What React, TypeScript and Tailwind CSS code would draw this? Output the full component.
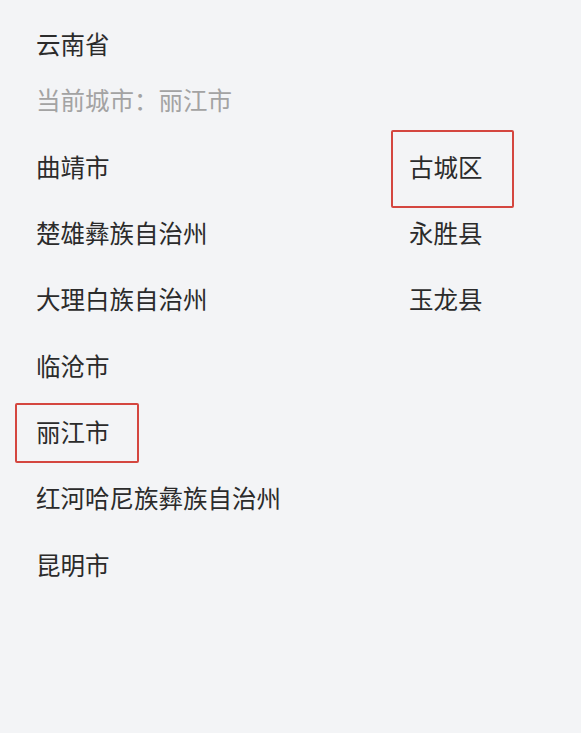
const cities = [
  "曲靖市",
  "楚雄彝族自治州",
  "大理白族自治州",
  "临沧市",
  "丽江市",
  "红河哈尼族彝族自治州",
  "昆明市",
];

const districts = ["古城区", "永胜县", "玉龙县"];

export default function App() {
  const selectedCity = "丽江市";
  const selectedDistrict = "古城区";

  return (
    <div
      className="min-h-[733px] w-full bg-[#f3f4f6] text-[24.5px] leading-none text-[#2b2b2b]"
      style={{ fontFamily: '"Noto Sans CJK SC", "Noto Sans", sans-serif' }}
    >
      <div className="pt-[11px] pl-9">
        <div className="flex h-[66px] items-center">云南省</div>
        <div className="flex h-[46px] items-center text-[#a3a3a3]">当前城市：丽江市</div>
      </div>

      <div className="mt-[11px] flex">
        {/* province cities */}
        <div className="w-[409px] pl-9">
          {cities.map((c) => (
            <div key={c} className="relative flex h-[66.3px] items-center">
              {c}
              {c === selectedCity && (
                <span className="pointer-events-none absolute left-[-21px] top-[4px] h-[60px] w-[124px] rounded-[2px] border-2 border-[#d4463f]" />
              )}
            </div>
          ))}
        </div>

        {/* districts */}
        <div className="flex-1">
          {districts.map((d) => (
            <div key={d} className="relative flex h-[66.3px] items-center">
              {d}
              {d === selectedDistrict && (
                <span className="pointer-events-none absolute left-[-18px] top-[-4px] h-[78px] w-[123px] rounded-[2px] border-2 border-[#d4463f]" />
              )}
            </div>
          ))}
        </div>
      </div>
    </div>
  );
}
